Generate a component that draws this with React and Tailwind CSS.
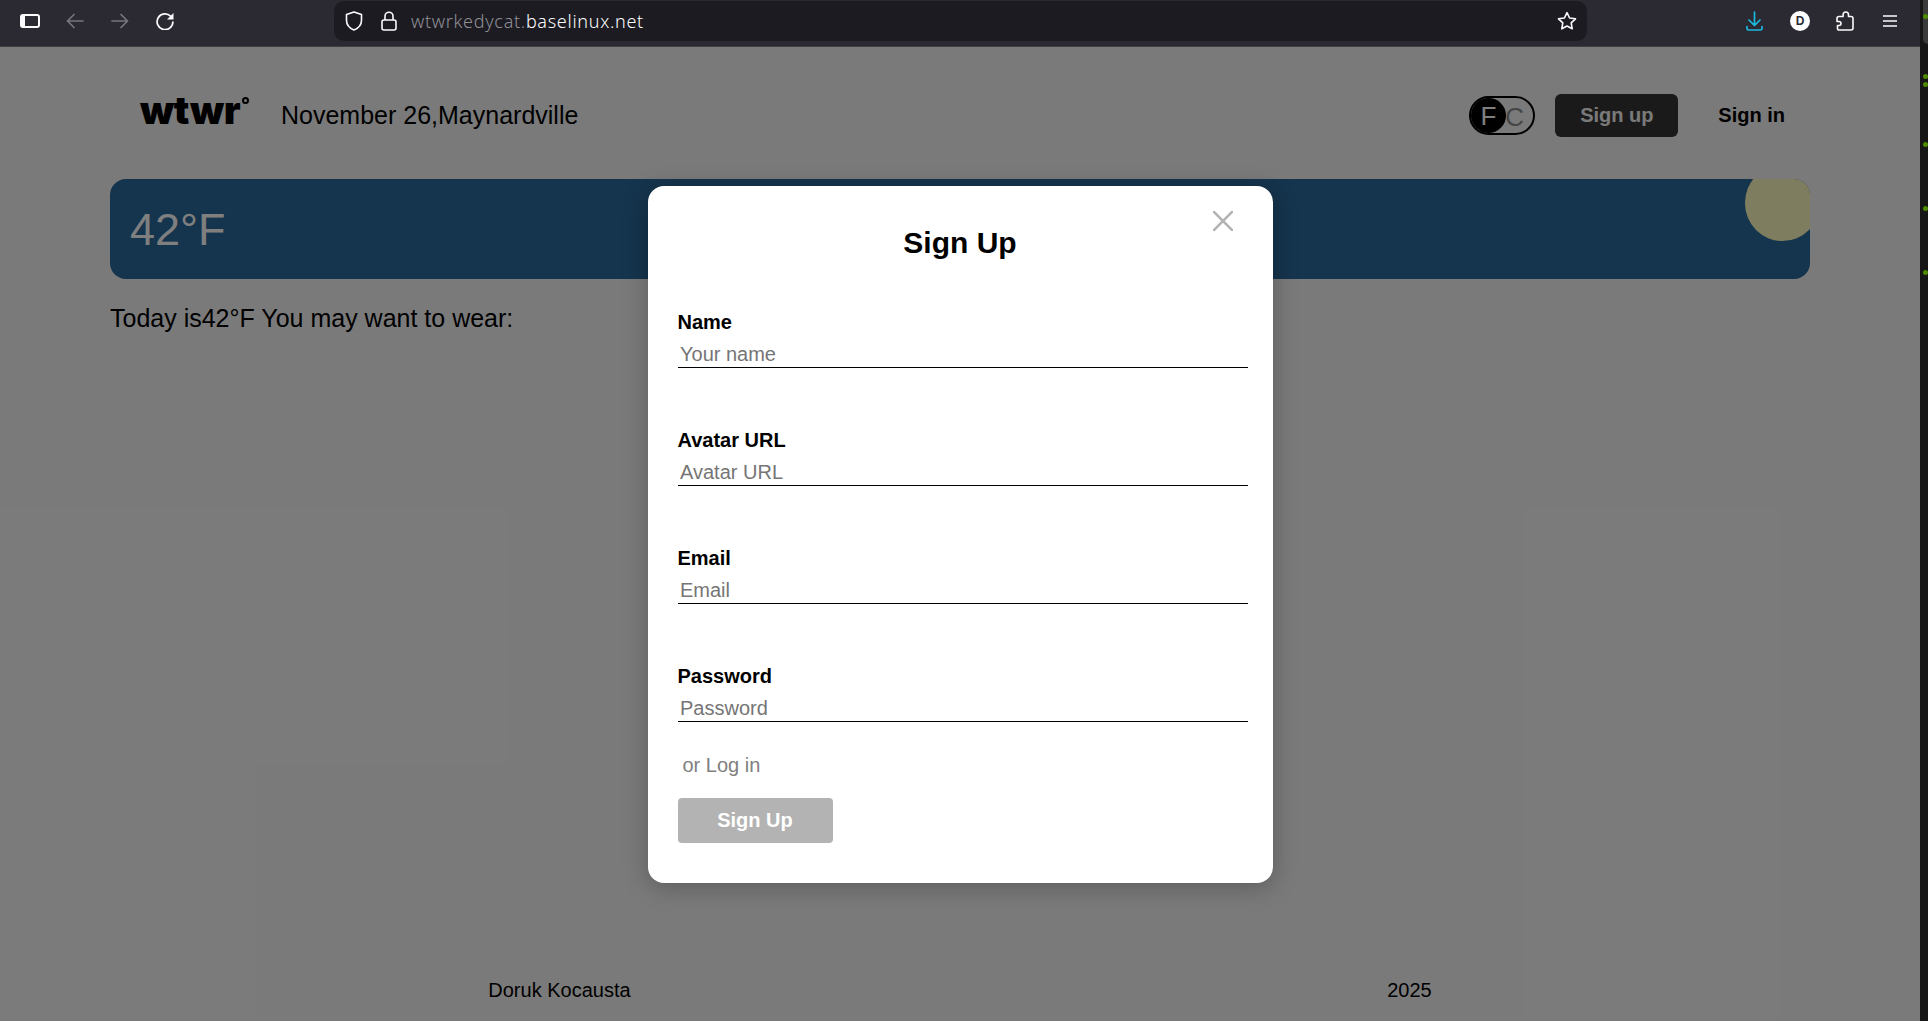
import React from "react";

const sans = "font-['Liberation_Sans',Arial,sans-serif]";

function Field({ label, placeholder, type = "text", className = "" }) {
  return (
    <label className={`flex flex-col ${className}`}>
      <span className="h-[23px] text-[20px] leading-[23px] font-bold text-black">{label}</span>
      <input
        type={type}
        placeholder={placeholder}
        className="h-[34px] w-full border-b border-black bg-transparent pt-[9px] pl-[2.5px] text-[20px] leading-[23px] outline-none placeholder:text-[#757575] placeholder:opacity-100"
      />
    </label>
  );
}

function Chrome() {
  return (
    <div className="flex h-[47px] w-full shrink-0 items-start border-b border-[#3f3e45] bg-[#2b2a33] pt-px">
      <div className="flex h-[40px] items-center pl-[20px]">
        <svg width="20" height="14" viewBox="0 0 20 14" fill="none">
          <rect x="1" y="1" width="18" height="12" rx="2" stroke="#fbfbfe" strokeWidth="2" />
          <rect x="1" y="1" width="4" height="12" fill="#fbfbfe" />
        </svg>
        <svg className="ml-[26px]" width="18" height="16" viewBox="0 0 18 16" fill="none" stroke="#77767c" strokeWidth="1.7" strokeLinecap="round" strokeLinejoin="round">
          <path d="M17 8H1.5M8 1.5 1.5 8 8 14.5" />
        </svg>
        <svg className="ml-[27px]" width="18" height="16" viewBox="0 0 18 16" fill="none" stroke="#77767c" strokeWidth="1.7" strokeLinecap="round" strokeLinejoin="round">
          <path d="M1 8h15.5M10 1.5 16.5 8 10 14.5" />
        </svg>
        <svg className="ml-[27px]" width="18" height="18" viewBox="0 0 18 18" fill="none">
          <path d="M14.6 4.2A7.9 7.9 0 1 0 16.9 10" stroke="#fbfbfe" strokeWidth="1.7" strokeLinecap="round" />
          <path d="M17.5 1v6.5H11z" fill="#fbfbfe" />
        </svg>
      </div>
      <div className="ml-[160px] flex h-[40px] w-[1253px] items-center rounded-[10px] bg-[#1c1b22] pl-[11px]">
        <svg width="18" height="20" viewBox="0 0 18 20" fill="none" stroke="#fbfbfe" strokeWidth="1.6" strokeLinejoin="round">
          <path d="M9 1 1.5 3.6v5.6c0 4.5 3 7.9 7.5 9.8 4.5-1.9 7.5-5.3 7.5-9.8V3.6z" />
        </svg>
        <svg className="ml-[18px]" width="16" height="20" viewBox="0 0 16 20" fill="none" stroke="#fbfbfe" strokeWidth="1.6">
          <rect x="1" y="9" width="14" height="10" rx="2" />
          <path d="M4 9V5.2a4 4 0 0 1 8 0V9" />
        </svg>
        <span className="ml-[14px] font-['Noto_Sans',sans-serif] text-[18px] font-light tracking-[0.7px] text-[#8f8f94]">
          wtwrkedycat.<span className="text-[#fbfbfe]">baselinux.net</span>
        </span>
        <svg className="mr-[10px] ml-auto" width="20" height="20" viewBox="0 0 20 20" fill="none" stroke="#fbfbfe" strokeWidth="1.6" strokeLinejoin="round">
          <path d="M10 1.6 12.6 7l5.9.8-4.3 4.1 1 5.9L10 15l-5.2 2.8 1-5.9L1.5 7.8 7.4 7z" />
        </svg>
      </div>
      <div className="flex h-[40px] items-center">
        <svg className="ml-[159px]" width="17" height="20" viewBox="0 0 17 20" fill="none" stroke="#1cb9de" strokeWidth="1.7" strokeLinecap="round" strokeLinejoin="round">
          <path d="M8.5 1v13M3 9l5.5 5.5L14 9M1 15.5v2a1.5 1.5 0 0 0 1.5 1.5h12a1.5 1.5 0 0 0 1.5-1.5v-2" />
        </svg>
        <div className="ml-[27px] flex h-[20px] w-[20px] items-center justify-center rounded-full bg-white font-['Liberation_Sans',sans-serif] text-[12px] leading-none font-bold text-[#2b2a33]">
          D
        </div>
        <svg className="ml-[26px]" width="18" height="20" viewBox="0 0 18 20" fill="none" stroke="#fbfbfe" strokeWidth="1.6" strokeLinejoin="round">
          <path d="M2.5 19H15a2 2 0 0 0 2-2V7.500a2 2 0 0 0-2-2h-2.500V3.700a2.700 2.700 0 0 0-5.400 0v1.800H3a2 2 0 0 0-2 2v3h2a2 2 0 0 1 0 4H1.500V17.500a1.500 1.500 0 0 0 1 1.500z" />
        </svg>
        <svg className="ml-[29px]" width="14" height="12" viewBox="0 0 14 12" fill="none" stroke="#fbfbfe" strokeWidth="1.5">
          <path d="M0 1h14M0 6h14M0 11h14" />
        </svg>
      </div>
    </div>
  );
}

function Page() {
  return (
    <div className="flex h-full flex-col bg-[#f5f5f5] px-[110px] text-black">
      <header className="flex items-center pt-[47px] pb-[42px]">
        <div className="relative ml-[30px] flex h-[43px] w-[107px] items-center pb-[12px]">
          <span className="font-['Inter',sans-serif] text-[39px] leading-none font-black tracking-[-0.4px] text-black">wtwr</span>
          <span className="absolute top-[3px] right-[-2px] h-[7px] w-[7px] rounded-full border-2 border-black" />
        </div>
        <span className="mb-[2px] ml-[34px] text-[25px] leading-[30px]">November 26,Maynardville</span>
        <div className="ml-auto flex h-[39px] w-[66px] items-center rounded-[20px] border-2 border-black">
          <span className="flex h-[35px] w-[35px] items-center justify-center rounded-full bg-black pr-[1px] text-[26px] leading-none text-white">F</span>
          <span className="mt-[2px] ml-[-1px] text-[26px] leading-none text-[#8c8c8c]">C</span>
        </div>
        <button className="ml-[20px] h-[43px] w-[123px] rounded-[6px] bg-[#343434] pb-[2px] text-[20px] font-bold text-[#f5f5f5]">Sign up</button>
        <button className="mr-[25px] ml-[40px] pb-[2px] text-[20px] font-bold text-black">Sign in</button>
      </header>

      <section className="relative flex h-[100px] shrink-0 items-center overflow-hidden rounded-[16px] bg-[#2a689a] pt-[2px] pl-[20px]">
        <span className="text-[45px] leading-[50px] text-white">42°F</span>
        <span className="absolute top-[-14px] right-[-10px] h-[76px] w-[75px] rounded-full bg-[#fffabe]" />
      </section>

      <p className="mt-[24px] text-[25px] leading-[30px]">Today is42°F You may want to wear:</p>

      <footer className="mt-auto flex justify-around pb-[19px] text-[20px] leading-[23px]">
        <span>Doruk Kocausta</span>
        <span>2025</span>
      </footer>
    </div>
  );
}

function Modal() {
  return (
    <div className="absolute inset-0 flex items-center justify-center bg-black/50">
      <form className="relative flex h-[697px] w-[625px] flex-col rounded-[16px] bg-white pt-[40px] pr-[25px] pb-[40px] pl-[30px] text-black shadow-[0_4px_24px_rgba(0,0,0,0.25)]">
        <button type="button" aria-label="Close" className="absolute top-[25px] right-[40px]">
          <svg className="block" width="20" height="20" viewBox="0 0 20 20" fill="none" stroke="#b3b3b3" strokeWidth="2.6">
            <path d="M0 0 20 20M20 0 0 20" />
          </svg>
        </button>
        <h2 className="mr-[-1px] ml-[-6px] h-[34px] text-center text-[30px] leading-[34px] font-bold">Sign Up</h2>
        <Field className="mt-[51px]" label="Name" placeholder="Your name" />
        <Field className="mt-[61px]" label="Avatar URL" placeholder="Avatar URL" />
        <Field className="mt-[61px]" label="Email" placeholder="Email" type="email" />
        <Field className="mt-[61px]" label="Password" placeholder="Password" type="password" />
        <span className="mt-[32px] pl-[5px] text-[20px] leading-[23px] text-[#808080]">or Log in</span>
        <button type="button" className="mt-[21px] h-[45px] w-[155px] rounded-[4px] bg-[#b3b3b3] text-[20px] font-bold text-white">Sign Up</button>
      </form>
    </div>
  );
}

export default function App() {
  return (
    <div className={`flex h-screen w-full overflow-hidden ${sans}`}>
      <div className="flex min-w-0 flex-1 flex-col">
        <Chrome />
        <main className="relative min-h-0 flex-1">
          <Page />
          <Modal />
        </main>
      </div>
      <aside className="relative w-2 shrink-0 bg-[#161616]">
        <span className="absolute top-0 left-[3px] h-[44px] w-[5px] rounded-bl-[6px] bg-[#3a3a3a]" />
        <span className="absolute top-[14px] left-[3px] h-[5px] w-[5px] rounded-full bg-[#4e8a00]" />
        <span className="absolute top-[74px] left-[3px] h-[5px] w-[5px] rounded-full bg-[#4e8a00]" />
        <span className="absolute top-[82px] left-[3px] h-[5px] w-[5px] rounded-full bg-[#4e8a00]" />
        <span className="absolute top-[142px] left-[3px] h-[5px] w-[5px] rounded-full bg-[#4e8a00]" />
        <span className="absolute top-[206px] left-[3px] h-[5px] w-[5px] rounded-full bg-[#4e8a00]" />
        <span className="absolute top-[270px] left-[3px] h-[5px] w-[5px] rounded-full bg-[#4e8a00]" />
      </aside>
    </div>
  );
}
